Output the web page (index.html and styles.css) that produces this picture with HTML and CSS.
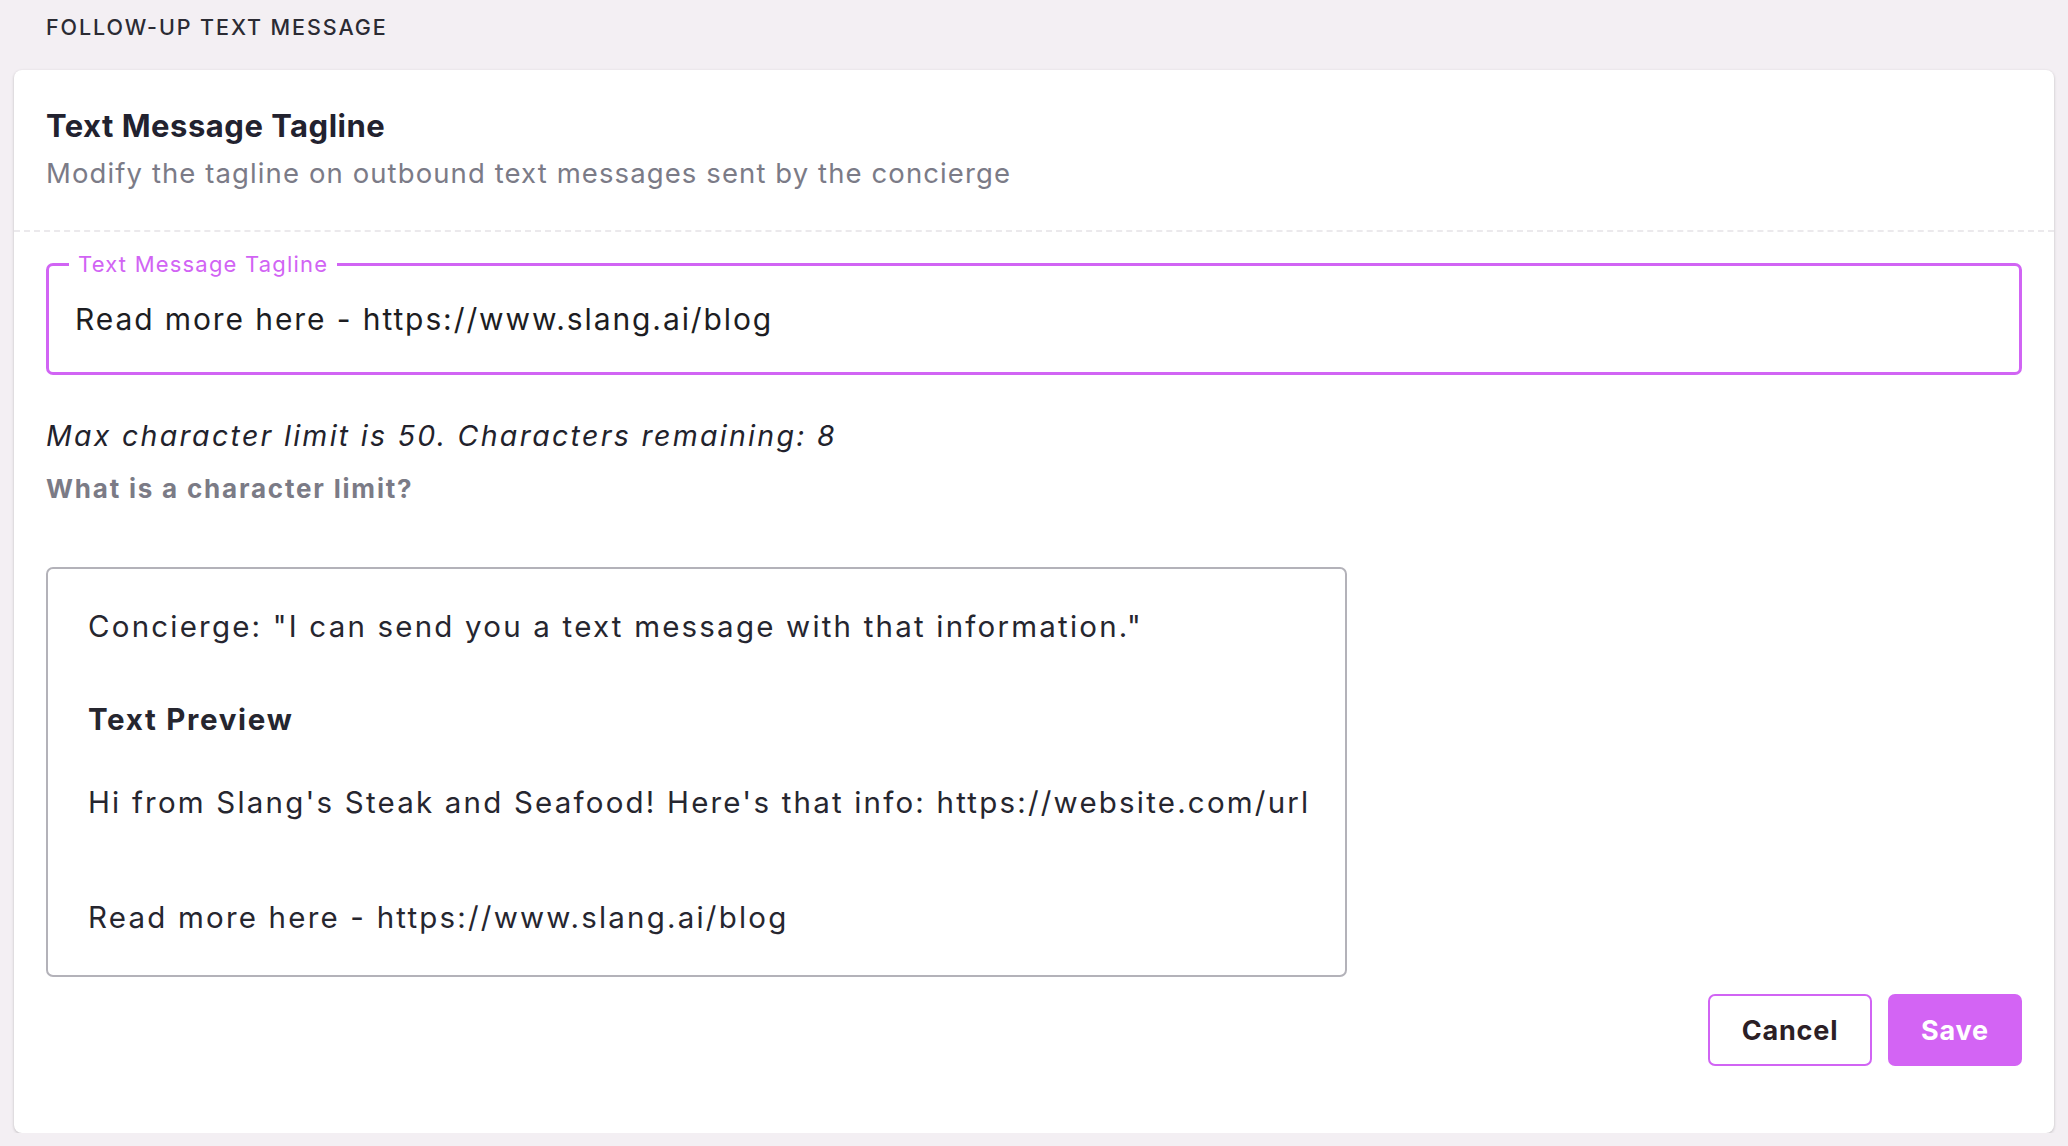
FILE: index.html
```html
<!DOCTYPE html>
<html lang="en">
<head>
  <meta charset="UTF-8" />
  <meta name="viewport" content="width=device-width, initial-scale=1.0"/>
  <title>Follow-up Text Message</title>
  <link rel="stylesheet" href="styles.css">
</head>
<body>
  <div class="section-label">FOLLOW-UP TEXT MESSAGE</div>

  <div class="card">
    <div class="card-head">
      <h2 class="card-title">Text Message Tagline</h2>
      <p class="card-subtitle">Modify the tagline on outbound text messages sent by the concierge</p>
    </div>

    <div class="card-body">
      <div class="outlined-field">
        <label class="field-label" for="tagline">Text Message Tagline</label>
        <input id="tagline" type="text" value="Read more here - https://www.slang.ai/blog" />
      </div>

      <p class="char-count">Max character limit is 50. Characters remaining: 8</p>
      <a class="help-link" href="#">What is a character limit?</a>

      <div class="preview-box">
        <p class="preview-line">Concierge: "I can send you a text message with that information."</p>
        <h3 class="preview-title">Text Preview</h3>
        <p class="preview-line">Hi from Slang's Steak and Seafood! Here's that info: https://website.com/url</p>
        <p class="preview-line preview-tagline">Read more here - https://www.slang.ai/blog</p>
      </div>

      <div class="actions">
        <button class="btn btn-outline" type="button">Cancel</button>
        <button class="btn btn-primary" type="submit">Save</button>
      </div>
    </div>
  </div>
</body>
</html>
```

FILE: styles.css
```css
body {
  background-color: #f3eff3;
  font-family: 'Inter', 'Open Sans', sans-serif;
  margin: 0;
  padding: 0 14px;
  color: #23232f;
}

.section-label {
  height: 70px;
  box-sizing: border-box;
  padding: 13px 0 0 32px;
  font-size: 21.5px;
  line-height: 28px;
  font-weight: 500;
  letter-spacing: 1.9px;
  color: #2b2b33;
}

.card {
  background-color: #fff;
  border-radius: 8px;
  box-shadow: 0 1px 3px rgba(0,0,0,0.22);
}

.card-head {
  height: 162px;
  box-sizing: border-box;
  padding: 38px 32px 0;
  border-bottom: 2px dashed #ebe9ec;
}
.card-title {
  margin: 0;
  font-size: 31px;
  line-height: 36px;
  font-weight: 700;
  letter-spacing: 0.5px;
  color: #22222f;
}
.card-subtitle {
  margin: 12px 0 0;
  font-size: 27.5px;
  line-height: 34px;
  letter-spacing: 1.1px;
  color: #7b7b87;
}

.card-body {
  padding: 31px 32px 67px;
}

.outlined-field {
  position: relative;
  height: 112px;
  box-sizing: border-box;
  border: 3px solid #d164f4;
  border-radius: 7px;
}
.field-label {
  position: absolute;
  top: -16px;
  left: 20px;
  padding: 0 9px;
  background-color: #fff;
  font-size: 22px;
  line-height: 28px;
  letter-spacing: 1.2px;
  color: #d164f4;
}
.outlined-field input {
  width: 100%;
  height: 100%;
  box-sizing: border-box;
  border: none;
  outline: none;
  background: transparent;
  padding: 0 26px;
  font-family: inherit;
  font-size: 30px;
  letter-spacing: 1.9px;
  color: #1d1d22;
}

.char-count {
  margin: 41px 0 0;
  font-size: 28.5px;
  line-height: 40px;
  font-style: italic;
  letter-spacing: 2.3px;
  color: #22222c;
}
.help-link {
  display: block;
  width: fit-content;
  margin-top: 16px;
  font-size: 26px;
  line-height: 34px;
  font-weight: 700;
  letter-spacing: 1.8px;
  color: #7b7b86;
  text-decoration: none;
}

.preview-box {
  width: 1301px;
  height: 410px;
  box-sizing: border-box;
  margin-top: 61px;
  padding: 37px 30px 0 40px;
  border: 2px solid #b3b2b9;
  border-radius: 7px;
}
.preview-line {
  margin: 0;
  font-size: 29.5px;
  line-height: 40px;
  letter-spacing: 2.2px;
  white-space: nowrap;
  color: #26262f;
}
.preview-title {
  margin: 53px 0 0;
  font-size: 29.5px;
  line-height: 40px;
  font-weight: 700;
  letter-spacing: 1.7px;
  color: #26262f;
}
.preview-title + .preview-line {
  margin-top: 43px;
}
.preview-tagline {
  margin-top: 75px;
}

.actions {
  display: flex;
  justify-content: flex-end;
  gap: 16px;
  margin-top: 17px;
}
.btn {
  height: 72px;
  border-radius: 7px;
  font-family: inherit;
  font-size: 27px;
  font-weight: 700;
  letter-spacing: 0.8px;
  cursor: pointer;
}
.btn-outline {
  width: 164px;
  background-color: #fff;
  border: 2px solid #d164f4;
  color: #2c1f26;
}
.btn-primary {
  width: 134px;
  background-color: #d364f4;
  border: none;
  color: #fff;
}
.btn-primary:hover {
  background-color: #c450e8;
}
```
